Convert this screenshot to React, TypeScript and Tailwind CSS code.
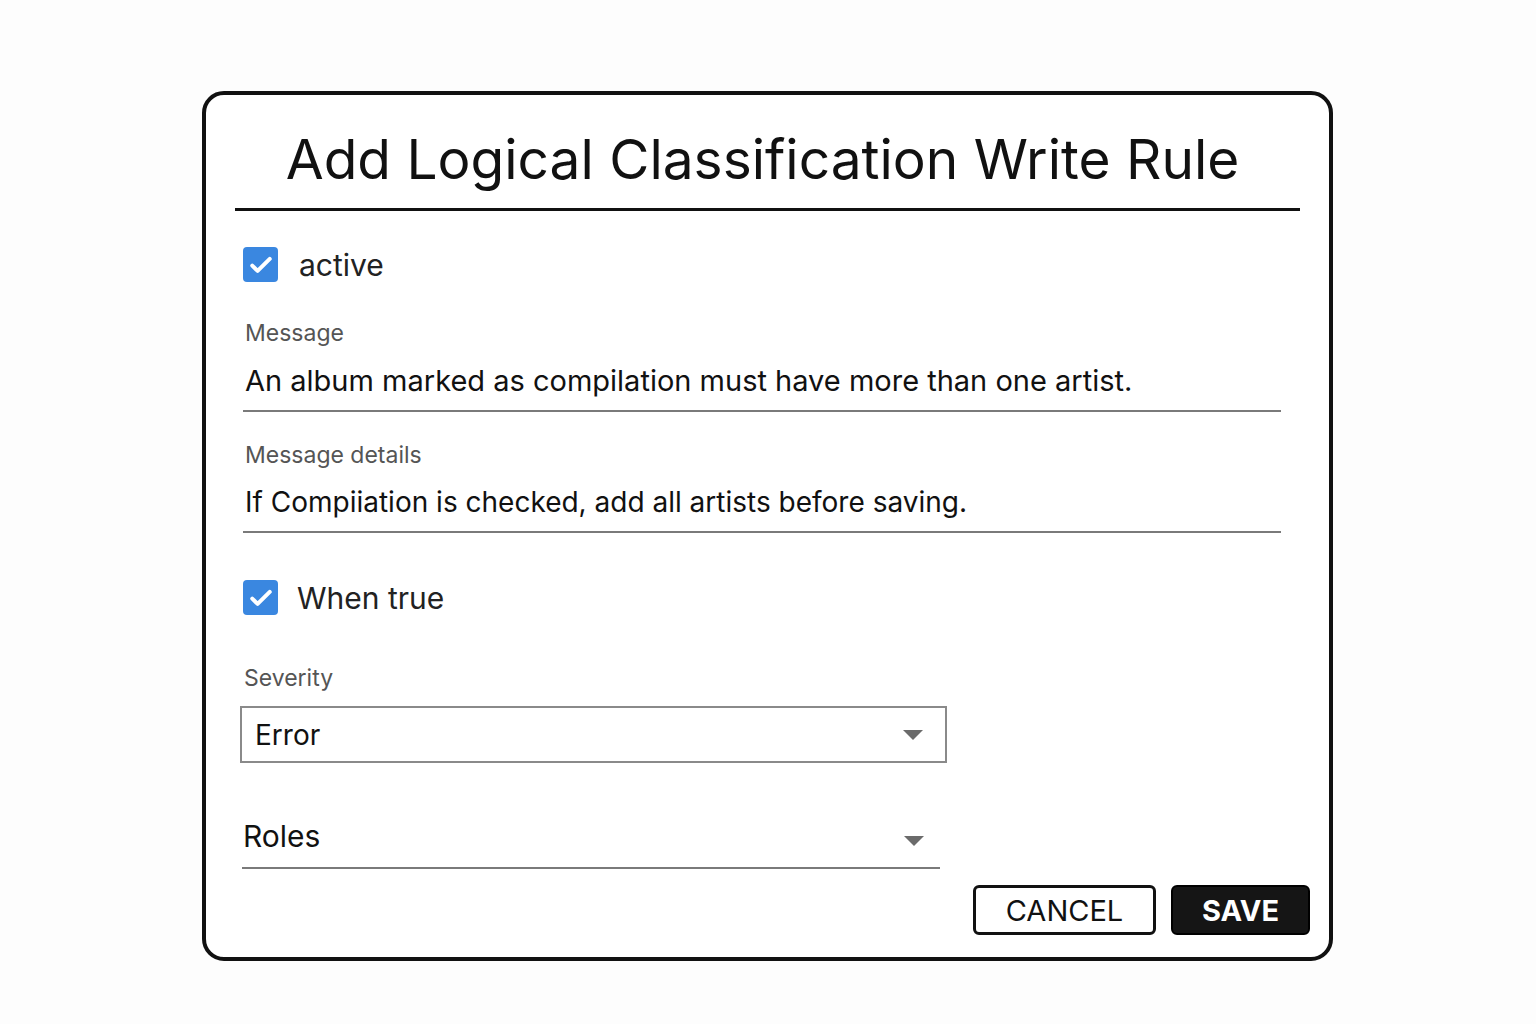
import React from "react";

function Check() {
  return (
    <div className="w-[35px] h-[35px] rounded-[4px] bg-[#3a87e0] flex items-center justify-center shrink-0">
      <svg width="28" height="28" viewBox="0 0 24 24" fill="none">
        <path d="M4.5 12.5l4.6 4.6L19.5 6.8" stroke="white" strokeWidth="3.4" strokeLinecap="round" strokeLinejoin="round" />
      </svg>
    </div>
  );
}

function Caret() {
  return (
    <svg width="20" height="10" viewBox="0 0 20 10">
      <path d="M0 0h20L10 10z" fill="#6b6b6b" />
    </svg>
  );
}

export default function App() {
  return (
    <div className="w-[1536px] h-[1024px] bg-[#fdfdfd] pt-[91px] pl-[202px]" style={{ fontFamily: "Inter, 'Noto Sans', sans-serif" }}>
      <div className="w-[1131px] h-[870px] border-[4px] border-[#111] rounded-[22px] bg-white flex flex-col px-[29px]">
        <div className="h-[116px] flex items-end justify-center pb-[21px] pr-[10px] border-b-[3px] border-[#111]">
          <h1 className="text-[55px] leading-none text-[#111]">Add Logical Classification Write Rule</h1>
        </div>
        <div className="pl-[8px] pr-[19px] flex flex-col">
          <div className="flex items-center gap-[21px] mt-[36px]">
            <Check />
            <span className="text-[30px] text-[#222] leading-none">active</span>
          </div>
          <div className="mt-[40px] text-[23px] text-[#555] leading-none pl-[2px]">Message</div>
          <div className="mt-[21px] text-[29px] text-[#111] leading-none pl-[2px] pb-[15px] border-b-[2px] border-[#7a7a7a]">An album marked as compilation must have more than one artist.</div>
          <div className="mt-[32px] text-[23px] text-[#555] leading-none pl-[2px]">Message details</div>
          <div className="mt-[20px] h-[46px] text-[28px] text-[#111] leading-none pl-[2px] pt-[1px] border-b-[2px] border-[#7a7a7a]">If Compiiation is checked, add all artists before saving.</div>
          <div className="flex items-center gap-[19px] mt-[47px]">
            <Check />
            <span className="text-[30px] text-[#222] leading-none">When true</span>
          </div>
          <div className="mt-[52px] text-[23px] text-[#555] leading-none pl-[1px]">Severity</div>
          <div className="mt-[16px] -ml-[3px] w-[707px] h-[57px] border-[2px] border-[#8a8a8a] flex items-center justify-between pl-[13px] pr-[22px]">
            <span className="text-[28px] text-[#111] leading-none">Error</span>
            <Caret />
          </div>
          <div className="mt-[58px] -ml-[1px] w-[698px] h-[48px] border-b-[2px] border-[#7a7a7a] flex items-start justify-between pl-[1px] pr-[16px]">
            <span className="text-[30px] text-[#111] leading-none">Roles</span>
            <span className="mt-[15px]"><Caret /></span>
          </div>
          <div className="flex justify-end gap-[15px] mt-[16px] -mr-[29px]">
            <div className="w-[183px] h-[50px] border-[3px] border-[#111] rounded-[6px] flex items-center justify-center text-[29px] text-[#111] leading-none">CANCEL</div>
            <div className="w-[139px] h-[50px] bg-[#151515] border-[2px] border-[#000] rounded-[6px] flex items-center justify-center text-[29px] font-bold text-white leading-none">SAVE</div>
          </div>
        </div>
      </div>
    </div>
  );
}
